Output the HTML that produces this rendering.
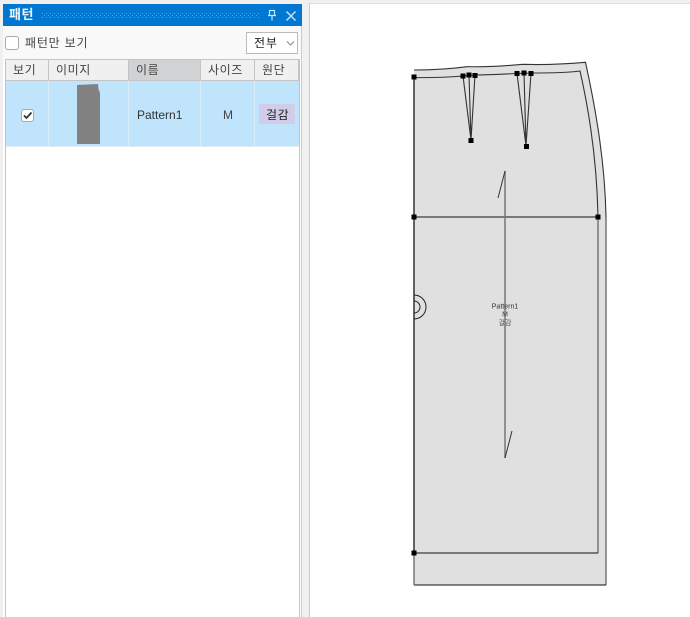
<!DOCTYPE html>
<html lang="ko"><head><meta charset="utf-8">
<style>
html,body{margin:0;padding:0;width:690px;height:617px;overflow:hidden;background:#f0f0f0}
body{position:relative;font-family:"Liberation Sans","Noto Sans CJK KR",sans-serif;font-size:12px;color:#222}
.a{position:absolute;box-sizing:border-box}
.t{position:absolute;white-space:nowrap;line-height:16px}
.h{position:absolute;top:59px;height:22px;background:#f0f0f0;border-right:1px solid #c4c4c4;border-top:1px solid #c4c4c4;box-sizing:border-box;line-height:21px;color:#444;padding-left:7px;letter-spacing:.6px}
.c{position:absolute;top:81px;height:65px;background:#c0e4fb;border-right:1px solid #d8eefb;box-sizing:border-box}
</style></head><body>
<div class="a" style="left:3px;top:4px;width:299px;height:613px;background:#fff;border-right:1px solid #ccc"></div>
<div class="a" style="left:3px;top:4px;width:299px;height:22px;background:#0078d2"></div>
<div class="t" style="left:9px;top:7px;color:#fff;font-size:13px;font-weight:bold;letter-spacing:.5px;opacity:.92">패턴</div>
<svg class="a" style="left:42px;top:12px" width="217" height="7" viewBox="0 0 217 7">
<defs><pattern id="d" width="4" height="4" patternUnits="userSpaceOnUse"><rect x="0" y="1" width="1" height="1" fill="#58ace8"/><rect x="2" y="3" width="1" height="1" fill="#58ace8"/></pattern></defs>
<rect x="0" y="0" width="217" height="6" fill="url(#d)"/>
</svg>
<svg class="a" style="left:262px;top:6px" width="36" height="18" viewBox="0 0 36 18" fill="none" stroke="#c4e2f8" stroke-width="1.200">
<path d="M7.500 4.500h5v5h-5zM6 9.500h8M10 9.500v5"/>
<path d="M24.500 5.500l9 9M33.500 5.500l-9 9" stroke-width="1.500"/>
</svg>
<div class="a" style="left:3px;top:26px;width:298px;height:33px;background:#f9f9f9"></div>
<div class="a" style="left:5px;top:36px;width:14px;height:14px;background:#fff;border:1px solid #aaa;border-radius:3px"></div>
<div class="t" style="left:25px;top:35px;color:#444;letter-spacing:.8px">패턴만 보기</div>
<div class="a" style="left:246px;top:32px;width:52px;height:22px;background:#fff;border:1px solid #bbb"></div>
<div class="t" style="left:254px;top:35px;color:#222;letter-spacing:.8px">전부</div>
<svg class="a" style="left:286px;top:40px" width="10" height="7" viewBox="0 0 10 7" fill="none" stroke="#888"><path d="M1 1.500l3.500 3.500 3.500-3.500"/></svg>

<div class="a" style="left:5px;top:59px;width:1px;height:558px;background:#c4c4c4"></div>
<div class="a" style="left:299px;top:59px;width:1px;height:558px;background:#c4c4c4"></div>
<div class="h" style="left:6px;width:43px">보기</div>
<div class="h" style="left:49px;width:80px">이미지</div>
<div class="h" style="left:129px;width:72px;background:#d0d2d4">이름</div>
<div class="h" style="left:201px;width:54px">사이즈</div>
<div class="h" style="left:255px;width:44px">원단</div>
<div class="a" style="left:6px;top:80px;width:293px;height:1px;background:#c4c4c4"></div>

<div class="c" style="left:6px;width:43px"></div>
<div class="c" style="left:49px;width:80px"></div>
<div class="c" style="left:129px;width:72px"></div>
<div class="c" style="left:201px;width:54px"></div>
<div class="c" style="left:255px;width:44px;border-right:0"></div>
<div class="a" style="left:6px;top:146px;width:293px;height:1px;background:#e4eef5"></div>

<div class="a" style="left:21px;top:109px;width:13px;height:13px;background:#fff;border:1px solid #aaa;border-radius:3px"></div>
<svg class="a" style="left:21px;top:109px" width="13" height="13" viewBox="0 0 13 13" fill="none" stroke="#333" stroke-width="1.800"><path d="M3 6.500l2.500 2.500L10.500 3.500"/></svg>
<svg class="a" style="left:77px;top:84px" width="24" height="60" viewBox="0 0 24 60"><path d="M0 1L21 0L21.500 5L23 9L23 60L0 60Z" fill="#828282"/></svg>
<div class="t" style="left:137px;top:107px;color:#333;letter-spacing:0">Pattern1</div>
<div class="t" style="left:223px;top:107px;color:#444">M</div>
<div class="a" style="left:259px;top:104px;width:36px;height:20px;background:#d1cde9"></div>
<div class="t" style="left:266px;top:107px;color:#222;letter-spacing:.6px">걸감</div>

<div class="a" style="left:309px;top:3px;width:381px;height:614px;background:#fff;border-left:1px solid #ccc;border-top:1px solid #ddd"></div>
<svg class="a" style="left:0;top:0" width="690" height="617" viewBox="0 0 690 617" fill="none">
<path d="M414 70C432 70 450 69 467 66.700C486 67 505 66 523 64.300C545 65 566 64 585.500 62.300C597 115 605 165 606 217L606 585L414 585Z" fill="#e0e0e0"/>
<path d="M414 70C432 70 450 69 467 66.700C486 67 505 66 523 64.300C545 65 566 64 585.500 62.300C597 115 605 165 606 217" stroke="#333" stroke-width="1.100"/>
<path d="M606 217V585" stroke="#777" stroke-width="1.500"/>
<path d="M414 585H606" stroke="#111" stroke-width="1.100"/>
<path d="M414 77V553" stroke="#333" stroke-width="1.500"/>
<path d="M414 553V585" stroke="#777" stroke-width="1.500"/>
<path d="M414 77.500C432 78 450 77 463 76L475 75C490 75 505 74 517 73.500L531 73C548 73 566 73 580 71C590 115 597 165 598 217" stroke="#333" stroke-width="1.100"/>
<path d="M598 217V553" stroke="#777" stroke-width="1.500"/>
<path d="M414 553H598M414 217H598" stroke="#111" stroke-width="1.100"/>
<path d="M463 76L471 140L475 75M469 75L471 140M517 73.500L526 146L531 73M524 73L526 146" stroke="#333" stroke-width="1.100"/>
<path d="M505 171V458" stroke="#777" stroke-width="1.500"/>
<path d="M505 171L498 198M505 458L512 431" stroke="#333" stroke-width="1"/>
<path d="M414 301A6 6 0 0 1 414 313M414 295A12 12 0 0 1 414 319" stroke="#222" stroke-width="1"/>
<g fill="#000">
<rect x="411.500" y="74.500" width="5" height="5"/><rect x="460.500" y="73.500" width="5" height="5"/><rect x="466.500" y="72.500" width="5" height="5"/><rect x="472.500" y="73" width="5" height="5"/>
<rect x="468.500" y="138" width="5" height="5"/><rect x="514.500" y="71" width="5" height="5"/><rect x="521.500" y="70.500" width="5" height="5"/><rect x="528.500" y="71" width="5" height="5"/>
<rect x="524" y="144" width="5" height="5"/><rect x="411.500" y="214.500" width="5" height="5"/><rect x="595.500" y="214.500" width="5" height="5"/><rect x="411.500" y="550.500" width="5" height="5"/>
</g>
<text x="505" y="308.500" font-size="7" fill="#333" text-anchor="middle" font-family="Liberation Sans">Pattern1</text>
<text x="505" y="316.500" font-size="7" fill="#444" text-anchor="middle" font-family="Liberation Sans">M</text>
<text x="505" y="325" font-size="7" fill="#555" text-anchor="middle" font-family="Liberation Sans,Noto Sans CJK KR,sans-serif">걸감</text>
</svg>
</body></html>
